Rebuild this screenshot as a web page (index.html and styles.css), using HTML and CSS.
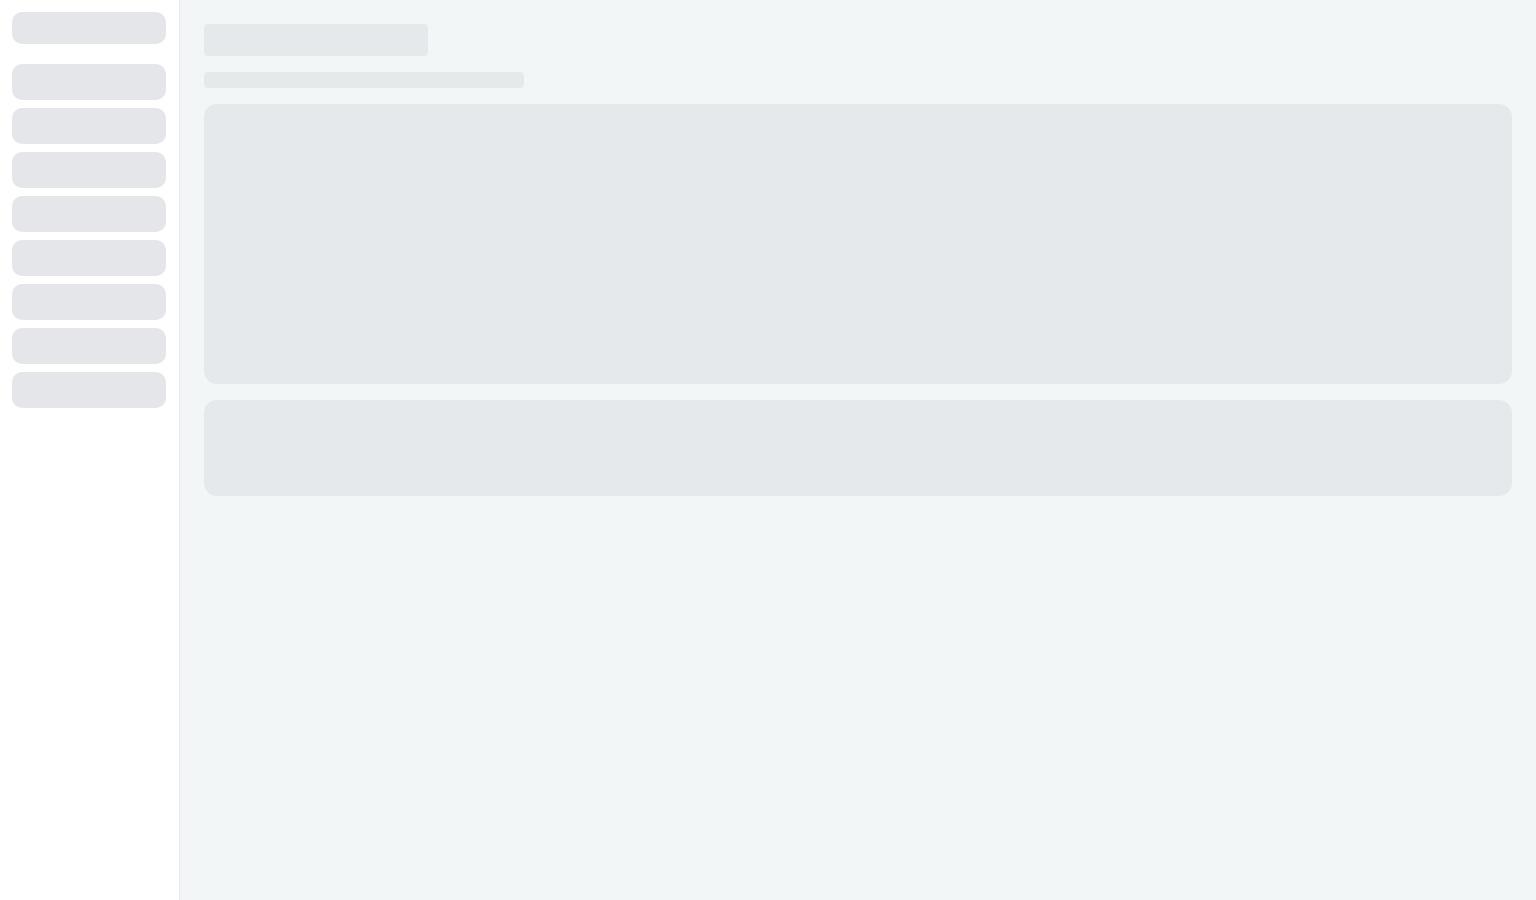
FILE: index.html
```html
<!DOCTYPE html>
<html lang="en">
<head>
<meta charset="utf-8">
<title>Loading</title>
<link rel="stylesheet" href="styles.css">
</head>
<body>
<div class="app">
  <aside class="sidebar">
    <div class="sk sk-logo"></div>
    <nav class="nav">
      <div class="sk sk-nav"></div>
      <div class="sk sk-nav"></div>
      <div class="sk sk-nav"></div>
      <div class="sk sk-nav"></div>
      <div class="sk sk-nav"></div>
      <div class="sk sk-nav"></div>
      <div class="sk sk-nav"></div>
      <div class="sk sk-nav"></div>
    </nav>
  </aside>
  <main class="main">
    <div class="sk sk-title"></div>
    <div class="sk sk-sub"></div>
    <div class="sk sk-card sk-card-lg"></div>
    <div class="sk sk-card sk-card-sm"></div>
  </main>
</div>
</body>
</html>
```
FILE: styles.css
```css
* { box-sizing: border-box; }
html, body { margin: 0; padding: 0; height: 100%; }
body { font-family: "Inter", "Liberation Sans", sans-serif; background: #f3f6f7; }
.app { display: flex; height: 900px; }
.sidebar {
  width: 180px;
  flex: 0 0 180px;
  background: #ffffff;
  border-right: 1px solid #e8ebee;
  padding: 12px 13px 12px 12px;
  display: flex;
  flex-direction: column;
}
.sk { background: #e5e6ea; }
.sk-logo { height: 32px; border-radius: 10px; }
.nav { margin-top: 20px; display: flex; flex-direction: column; gap: 8px; }
.sk-nav { height: 36px; border-radius: 10px; }
.main {
  flex: 1;
  background: #f3f6f7;
  padding: 24px;
  display: flex;
  flex-direction: column;
}
.main .sk { background: #e6e9ec; }
.sk-title { width: 224px; height: 32px; border-radius: 4px; }
.sk-sub { width: 320px; height: 16px; border-radius: 4px; margin-top: 16px; }
.sk-card { border-radius: 13px; margin-top: 16px; }
.sk-card-lg { height: 280px; }
.sk-card-sm { height: 96px; }
```
